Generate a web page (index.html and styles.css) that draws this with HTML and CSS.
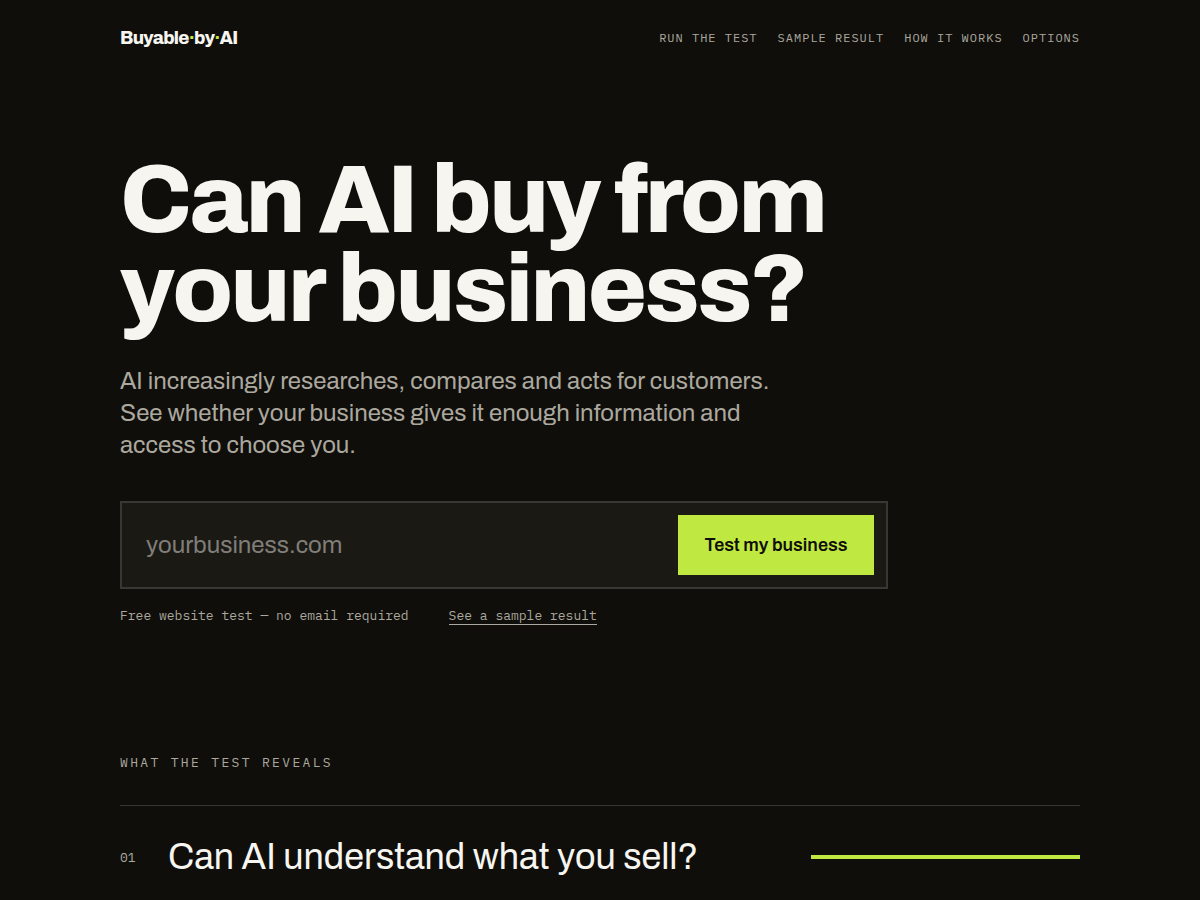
FILE: index.html
```html
<!DOCTYPE html>
<html lang="en">
<head>
    <meta charset="UTF-8">
    <meta name="viewport" content="width=device-width, initial-scale=1.0">
    <title>Buyable by AI</title>
    <link rel="stylesheet" href="styles.css">
</head>
<body>
    <header class="site-header wrap">
        <a class="brand" href="#top">Buyable<span class="dot">·</span>by<span class="dot">·</span>AI</a>
        <nav class="site-nav">
            <a href="#test">Run the test</a>
            <a href="#sample">Sample result</a>
            <a href="#how">How it works</a>
            <a href="#options">Options</a>
        </nav>
    </header>
    <main class="wrap" id="top">
        <section class="hero">
            <h1>Can AI buy from your business?</h1>
            <p class="lead">AI increasingly researches, compares and acts for customers. See whether your business gives it enough information and access to choose you.</p>
            <form class="test-form" id="test">
                <input type="text" name="site" aria-label="Your website" placeholder="yourbusiness.com">
                <button type="submit">Test my business</button>
            </form>
            <div class="meta">
                <span>Free website test — no email required</span>
                <a href="#sample">See a sample result</a>
            </div>
        </section>
        <section class="reveals">
            <h2>What the test reveals</h2>
            <ol class="questions">
                <li>
                    <span class="num">01</span>
                    <h3>Can AI understand what you sell?</h3>
                    <span class="bar"></span>
                </li>
            </ol>
        </section>
    </main>
</body>
</html>
```
FILE: styles.css
```css
:root {
    --bg: #0f0e0a;
    --panel: #1a1914;
    --line: #383733;
    --text: #f7f5f0;
    --muted: #aba89f;
    --lime: #bfe840;
    --sans: Archivo, "Liberation Sans", Arial, sans-serif;
    --mono: "IBM Plex Mono", "Liberation Mono", monospace;
}
* {
    box-sizing: border-box;
}
body {
    margin: 0;
    background: var(--bg);
    color: var(--text);
    font-family: var(--sans);
}
h1, h2, h3, p, ol {
    margin: 0;
    padding: 0;
}
a {
    color: inherit;
    text-decoration: none;
}
.wrap {
    width: 80%;
    max-width: 1120px;
    margin: 0 auto;
}
.site-header {
    display: flex;
    align-items: center;
    justify-content: space-between;
    padding: 26px 0;
}
.brand {
    font-size: 18px;
    line-height: 24px;
    font-weight: 800;
    letter-spacing: -0.04em;
}
.dot {
    color: var(--lime);
}
.site-nav {
    display: flex;
    gap: 20px;
    font-family: var(--mono);
    font-size: 12px;
    line-height: 14px;
    letter-spacing: 1px;
    text-transform: uppercase;
    color: var(--muted);
}
.hero {
    padding: 80px 0 128px;
}
h1 {
    max-width: 800px;
    font-size: 96px;
    line-height: 89px;
    font-weight: 800;
    letter-spacing: -0.03em;
}
.lead {
    max-width: 680px;
    margin-top: 31px;
    font-size: 24px;
    line-height: 32px;
    color: var(--muted);
}
.test-form {
    display: flex;
    max-width: 768px;
    margin-top: 40px;
    padding: 12px;
    border: 2px solid var(--line);
    background: var(--panel);
}
.test-form input {
    flex: 1;
    min-width: 0;
    padding: 0 12px;
    border: 0;
    outline: 0;
    background: none;
    color: var(--text);
    font: 24px var(--sans);
}
.test-form input::placeholder {
    color: #807e79;
}
.test-form button {
    min-width: 196px;
    height: 60px;
    padding: 0 24px;
    border: 0;
    background: var(--lime);
    color: var(--bg);
    font: 600 18px var(--sans);
}
.meta {
    display: flex;
    gap: 40px;
    margin-top: 18px;
    font-family: var(--mono);
    font-size: 13px;
    line-height: 17px;
    color: var(--muted);
}
.meta a {
    border-bottom: 1px solid;
}
h2 {
    font-family: var(--mono);
    font-size: 13px;
    line-height: 20px;
    font-weight: 400;
    letter-spacing: 0.18em;
    text-transform: uppercase;
    color: var(--muted);
}
.questions {
    margin-top: 32px;
    list-style: none;
}
.questions li {
    display: grid;
    grid-template-columns: 48px 1fr 28%;
    align-items: center;
    padding: 31px 0 20px;
    border-top: 1px solid var(--line);
}
.num {
    font-family: var(--mono);
    font-size: 13px;
    color: var(--muted);
}
h3 {
    font-size: 36px;
    line-height: 40px;
    font-weight: 400;
}
.bar {
    height: 4px;
    background: var(--lime);
}
```
